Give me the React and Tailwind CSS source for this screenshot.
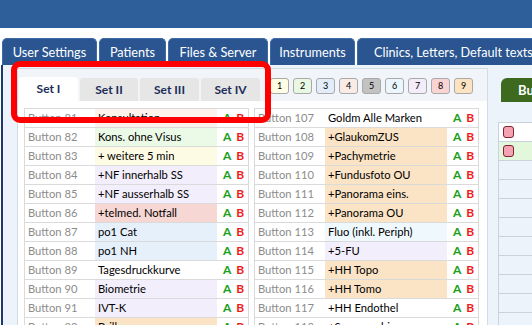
import React from "react";

const font = { fontFamily: "Lato, 'Liberation Sans', sans-serif" };

const leftRows = [
  ["Button 81", "Konsultation", "bg-[#fdf1ec]"],
  ["Button 82", "Kons. ohne Visus", "bg-[#ebf9e7]"],
  ["Button 83", "+ weitere 5 min", "bg-[#fdfbe4]"],
  ["Button 84", "+NF innerhalb SS", "bg-[#f3eefb]"],
  ["Button 85", "+NF ausserhalb SS", "bg-[#f3eefb]"],
  ["Button 86", "+telmed. Notfall", "bg-[#f7d7d4]"],
  ["Button 87", "po1 Cat", "bg-[#e6f0fb]"],
  ["Button 88", "po1 NH", "bg-[#e6f0fb]"],
  ["Button 89", "Tagesdruckkurve", "bg-white"],
  ["Button 90", "Biometrie", "bg-[#f3eefb]"],
  ["Button 91", "IVT-K", "bg-[#f3eefb]"],
  ["Button 92", "Brille", "bg-[#fbe4c6]"],
];

const rightRows = [
  ["Button 107", "Goldm Alle Marken", "bg-white"],
  ["Button 108", "+GlaukomZUS", "bg-[#fbe4c6]"],
  ["Button 109", "+Pachymetrie", "bg-[#fbe4c6]"],
  ["Button 110", "+Fundusfoto OU", "bg-[#fbe4c6]"],
  ["Button 111", "+Panorama eins.", "bg-[#fbe4c6]"],
  ["Button 112", "+Panorama OU", "bg-[#fbe4c6]"],
  ["Button 113", "Fluo (inkl. Periph)", "bg-[#eef8fd]"],
  ["Button 114", "+5-FU", "bg-[#f3eefb]"],
  ["Button 115", "+HH Topo", "bg-[#fbe4c6]"],
  ["Button 116", "+HH Tomo", "bg-[#fbe4c6]"],
  ["Button 117", "+HH Endothel", "bg-white"],
  ["Button 118", "+Sonographie", "bg-white"],
];

const numBoxes = [
  ["1", "bg-[#fffde3]"],
  ["2", "bg-[#e8f8e2]"],
  ["3", "bg-[#e2edf9]"],
  ["4", "bg-[#fbebe6]"],
  ["5", "bg-[#c2c2c2]"],
  ["6", "bg-[#ebf7fc]"],
  ["7", "bg-[#f4ecfb]"],
  ["8", "bg-[#fad3d3]"],
  ["9", "bg-[#fde3c2]"],
];

function Table({ rows }) {
  return (
    <div className="w-[225px] shrink-0 border-l border-r border-t border-[#dadada] flex flex-col">
      {rows.map(([label, text, bg]) => (
        <div key={label} className="flex h-[19px] border-b border-[#dadada] text-[11.2px] leading-[18px]">
          <div className="w-[70px] pl-[3px] text-[#8c8c8c] whitespace-nowrap overflow-hidden">{label}</div>
          <div className={`w-[122px] pl-[3px] text-black whitespace-nowrap overflow-hidden ${bg}`}>{text}</div>
          <div className="flex-1 flex pl-[6px] gap-[5px] font-bold text-[12px]">
            <span className="text-[#1aa01a]">A</span>
            <span className="text-[#f01c1c]">B</span>
          </div>
        </div>
      ))}
    </div>
  );
}

export default function App() {
  const tabs = [
    ["User Settings", "w-[95px]"],
    ["Patients", "w-[67px]"],
    ["Files & Server", "w-[100px]"],
    ["Instruments", "w-[85px]"],
    ["Clinics, Letters, Default texts", "w-[190px] text-left pl-[16px]"],
  ];
  return (
    <div className="relative w-[532px] h-[325px] overflow-hidden bg-white" style={font}>
      <div className="h-[28px] bg-[#2e5f9a]" />
      <div className="h-[10px] bg-white" />
      <div className="flex h-[27px] gap-[2px] pl-[2px] whitespace-nowrap">
        {tabs.map(([t, w]) => (
          <div
            key={t}
            className={`${w} shrink-0 rounded-t-[5px] bg-[#2a5590] border-t border-x border-[#3e6aa5] text-white text-[12.7px] leading-[26px] text-center`}
          >
            {t}
          </div>
        ))}
      </div>
      <div className="flex h-[260px] border-l-[2px] border-[#1c3a6c] ml-[1px] bg-[#edf3fb]">
        <div className="shrink-0 ml-[14px] mt-[3px] w-[471px] h-[280px] border border-[#d3dbe6] bg-white flex flex-col">
          <div className="h-[32px] bg-[#f1f5fa] flex items-start pt-[8px] pl-[1px]">
            <div className="flex gap-[2px] h-[24px] items-end">
              <div className="w-[59px] h-[24px] bg-white rounded-t-[3px] text-[12px] font-bold text-[#1c2d58] text-center leading-[24px]">Set I</div>
              <div className="w-[58px] h-[23px] bg-[#e6e6e6] rounded-t-[3px] text-[12px] font-bold text-[#1c2d58] text-center leading-[23px]">Set II</div>
              <div className="w-[59px] h-[23px] bg-[#e6e6e6] rounded-t-[3px] text-[12px] font-bold text-[#1c2d58] text-center leading-[23px]">Set III</div>
              <div className="w-[59px] h-[23px] bg-[#e6e6e6] rounded-t-[3px] text-[12px] font-bold text-[#1c2d58] text-center leading-[23px]">Set IV</div>
            </div>
            <div className="flex gap-[4px] ml-[10px] mt-[1px]">
              {numBoxes.map(([n, bg]) => (
                <div
                  key={n}
                  className={`w-[19px] h-[16px] rounded-[3px] border border-[#a9a9a9] ${bg} text-[9px] text-black text-center leading-[14px]`}
                >
                  {n}
                </div>
              ))}
            </div>
          </div>
          <div className="flex gap-[5px] pl-[6px] pt-[7px]">
            <Table rows={leftRows} />
            <Table rows={rightRows} />
          </div>
        </div>
        <div className="ml-[10px] flex-1 min-w-0 flex flex-col">
          <div className="ml-[3px] mt-[13px] h-[24px] w-[60px] shrink-0 rounded-t-[6px] bg-[#3d6a1f] text-white font-bold text-[13px] leading-[24px] pl-[17px] whitespace-nowrap">Buttons</div>
          <div className="mt-[20px] border-t border-l border-[#c9d3de] flex flex-col">
            <div className="h-[19px] bg-white border-b border-[#c9d3de] flex items-center pl-[4px]">
              <div className="w-[11px] h-[12px] rounded-[3px] bg-[#f4a3b2] border border-[#7d2332]" />
            </div>
            <div className="h-[19px] bg-[#e3f8da] border-b border-[#c9d3de] flex items-center pl-[4px]">
              <div className="w-[11px] h-[12px] rounded-[3px] bg-[#f4a3b2] border border-[#7d2332]" />
            </div>
            {[0, 1, 2, 3, 4, 5, 6, 7, 8].map((i) => (
              <div key={i} className="h-[19px] border-b border-[#c9d3de]" />
            ))}
          </div>
        </div>
      </div>
      <div className="absolute left-[11px] top-[61px] w-[260px] h-[62px] border-[6px] border-[#fe0000] rounded-[9px]" />
    </div>
  );
}
